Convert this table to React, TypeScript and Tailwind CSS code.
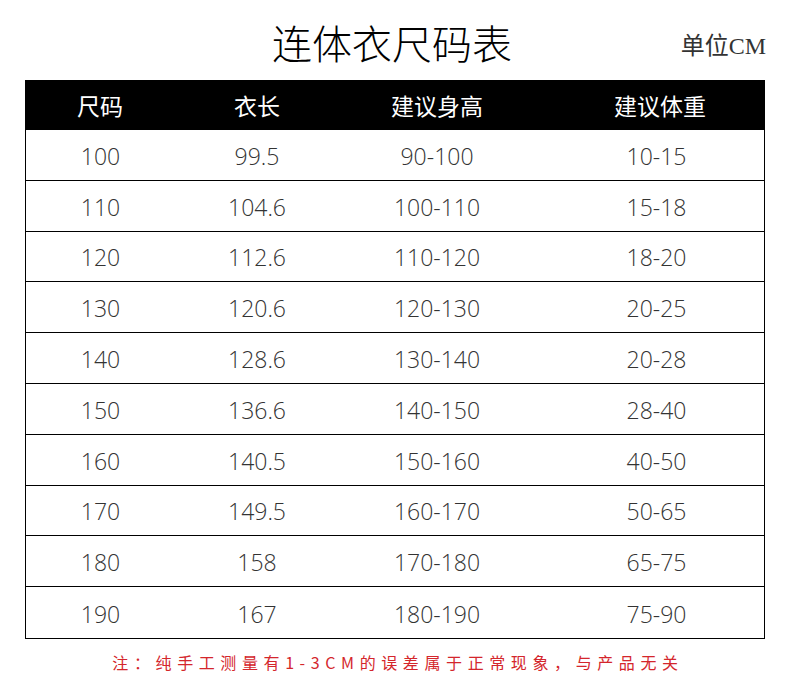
import React from "react";

const rows = [
  ["100", "99.5", "90-100", "10-15"],
  ["110", "104.6", "100-110", "15-18"],
  ["120", "112.6", "110-120", "18-20"],
  ["130", "120.6", "120-130", "20-25"],
  ["140", "128.6", "130-140", "20-28"],
  ["150", "136.6", "140-150", "28-40"],
  ["160", "140.5", "150-160", "40-50"],
  ["170", "149.5", "160-170", "50-65"],
  ["180", "158", "170-180", "65-75"],
  ["190", "167", "180-190", "75-90"],
];

const headers = ["尺码", "衣长", "建议身高", "建议体重"];

const cjk = { fontFamily: '"Noto Sans CJK SC", sans-serif' };
const num = { fontFamily: '"Open Sans", "Noto Sans CJK SC", sans-serif' };

export default function App() {
  return (
    <div className="w-[790px] h-[688px] bg-white overflow-hidden">
      {/* title row */}
      <div className="grid grid-cols-[1fr_auto_1fr] h-[80px] items-center px-[25px]">
        <div />
        <h1
          className="text-[40px] leading-none text-black font-light pt-[4px] pr-[6px]"
          style={cjk}
        >
          连体衣尺码表
        </h1>
        <div
          className="justify-self-end text-[24px] leading-none text-[#333] pt-[12px] -mr-[1px]"
          style={{ fontFamily: '"Liberation Serif", "Noto Sans CJK SC", serif' }}
        >
          单位CM
        </div>
      </div>

      {/* table */}
      <div className="mx-[25px] w-[740px]">
        <div
          className="grid grid-cols-[150px_164px_196px_1fr] h-[50px] bg-black text-white items-center text-[23px]"
          style={cjk}
        >
          {headers.map((h, i) => (
            <div key={h} className={`text-center ${i === 3 ? "pl-[20px]" : ""}`}>
              {h}
            </div>
          ))}
        </div>
        <div className="border-x border-b border-black">
          {rows.map((r, ri) => (
            <div
              key={r[0]}
              className={`grid grid-cols-[149px_164px_196px_1fr] h-[50.8px] items-center pt-[3px] text-[23px] font-light text-[#333] ${
                ri < rows.length - 1 ? "border-b-[1.5px] border-black" : ""
              }`}
              style={num}
            >
              {r.map((c, ci) => (
                <div key={ci} className={`text-center leading-none ${ci === 3 ? "pl-[14px]" : ""}`}>
                  {c}
                </div>
              ))}
            </div>
          ))}
        </div>
      </div>

      {/* note */}
      <p
        className="mt-[15px] text-center text-[16px] leading-none text-[#d4262c] tracking-[5.6px] pl-[6px]"
        style={cjk}
      >
        注：纯手工测量有1-3CM的误差属于正常现象，与产品无关
      </p>
    </div>
  );
}
